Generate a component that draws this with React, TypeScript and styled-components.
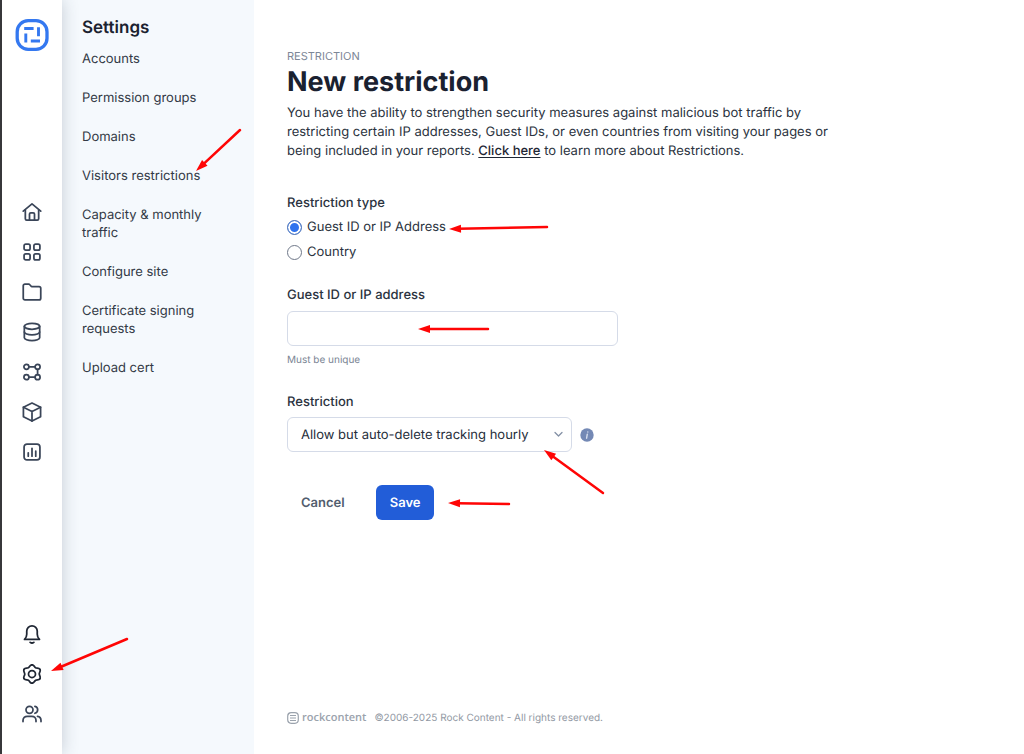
import React from "react";
import styled, { createGlobalStyle } from "styled-components";

const GlobalStyle = createGlobalStyle`
  *, *::before, *::after { box-sizing: border-box; }
  body {
    margin: 0;
    background: #ffffff;
    color: #2b3340;
    font-family: Inter, "Liberation Sans", sans-serif;
    font-size: 13px;
    line-height: 18px;
    text-rendering: geometricPrecision;
  }
  h1, h2, p, ul, fieldset { margin: 0; padding: 0; border: 0; }
  button, input, select { font: inherit; color: inherit; text-rendering: inherit; }
`;

const Page = styled.div`
  position: relative;
  display: flex;
  min-height: 100vh;
`;

const Rail = styled.nav`
  position: relative;
  z-index: 1;
  display: flex;
  flex-direction: column;
  align-items: center;
  flex: 0 0 62px;
  padding: 19px 0 28px;
  border-left: 2px solid #37373a;
  background: #ffffff;
  box-shadow: 0 0 16px rgba(40, 60, 80, 0.24);
`;

const RailGroup = styled.div<{ $push?: boolean }>`
  display: flex;
  flex-direction: column;
  gap: 16px;
  margin-top: ${(p) => (p.$push ? "auto" : "149px")};
`;

const RailLink = styled.a<{ $active?: boolean }>`
  display: flex;
  width: 24px;
  height: 24px;
  align-items: center;
  justify-content: center;
  color: ${(p) => (p.$active ? "#1f2633" : "#3a4558")};
`;

const LogoLink = styled.a`
  display: flex;
`;

const Sidebar = styled.aside`
  flex: 0 0 192px;
  padding: 18px 20px;
  background: #f5f9fd;
`;

const SidebarTitle = styled.h2`
  color: #1b2230;
  font-size: 17px;
  font-weight: 600;
  line-height: 20px;
`;

const Menu = styled.ul`
  display: flex;
  flex-direction: column;
  gap: 21px;
  margin-top: 12px;
  list-style: none;
`;

const MenuLink = styled.a`
  display: block;
  color: #333a46;
  text-decoration: none;
`;

const Main = styled.main`
  display: flex;
  flex: 1;
  flex-direction: column;
  min-width: 0;
  padding: 48px 33px 27px;
`;

const Eyebrow = styled.p`
  color: #7d8797;
  font-size: 11px;
  line-height: 16px;
`;

const Title = styled.h1`
  color: #1a2130;
  font-size: 27px;
  font-weight: 700;
  line-height: 36px;
`;

const Intro = styled.p`
  max-width: 550px;
  margin-top: 4px;
  line-height: 19px;
`;

const IntroLink = styled.a`
  color: #1f2633;
  font-weight: 500;
  text-underline-offset: 2px;
`;

const Form = styled.form`
  display: flex;
  flex-direction: column;
  align-items: flex-start;
`;

const Field = styled.div`
  display: flex;
  flex-direction: column;
  align-items: flex-start;
  width: 100%;
  margin-top: 25px;
`;

const RadioField = styled.fieldset`
  display: flex;
  flex-direction: column;
  gap: 7px;
  margin-top: 33px;
`;

const Legend = styled.legend`
  margin-bottom: 6px;
  padding: 0;
  font-weight: 500;
`;

const Label = styled.label`
  font-weight: 500;
`;

const RadioLabel = styled.label`
  display: flex;
  align-items: center;
  gap: 5px;
`;

const Radio = styled.input`
  appearance: none;
  width: 15px;
  height: 15px;
  margin: 0;
  border: 1px solid #6f7889;
  border-radius: 50%;
  background: #ffffff;

  &:checked {
    border-color: #5478b8;
    background: #2f73ee;
    box-shadow: inset 0 0 0 2px #ffffff;
  }
`;

const TextInput = styled.input`
  width: 331px;
  max-width: 100%;
  height: 35px;
  margin-top: 7px;
  padding: 0 13px;
  border: 1px solid #d5dbe8;
  border-radius: 6px;
  background: #ffffff;
`;

const Hint = styled.p`
  margin-top: 6px;
  color: #7b8594;
  font-size: 10px;
  line-height: 16px;
`;

const SelectRow = styled.div`
  display: flex;
  align-items: center;
  gap: 8px;
  margin-top: 6px;
`;

const SelectBox = styled.div`
  position: relative;
  display: flex;
  color: #8390a5;
`;

const Select = styled.select`
  appearance: none;
  width: 285px;
  height: 35px;
  padding: 0 24px 0 13px;
  border: 1px solid #d5dbe8;
  border-radius: 6px;
  background: #ffffff;
  color: #262e3b;
`;

const Chevron = styled.svg`
  position: absolute;
  top: 14px;
  right: 9px;
  pointer-events: none;
`;

const InfoButton = styled.button`
  display: flex;
  padding: 0;
  border: 0;
  background: none;
`;

const Actions = styled.div`
  display: flex;
  gap: 17px;
  margin-top: 33px;
`;

const Button = styled.button<{ $primary?: boolean }>`
  height: 35px;
  padding: 0 14px;
  border: 0;
  border-radius: 6px;
  background: ${(p) => (p.$primary ? "#225dd8" : "transparent")};
  color: ${(p) => (p.$primary ? "#ffffff" : "#525d6e")};
  font-weight: 600;
`;

const Footer = styled.footer`
  display: flex;
  align-items: center;
  gap: 8px;
  margin-top: auto;
  color: #9299a4;
  font-size: 10px;
`;

const Brand = styled.span`
  display: flex;
  align-items: center;
  gap: 3px;
  color: #9ba3ad;
  font-family: "Open Sans", "Noto Sans", sans-serif;
  font-size: 11px;
  font-weight: 600;
`;

const ArrowLayer = styled.svg`
  position: absolute;
  top: 0;
  left: 0;
  z-index: 2;
  pointer-events: none;
`;

const icons = {
  home: (
    <>
      <path d="M1.500 11 12 2.300 22.500 11" />
      <path d="M4 9.500V20a1.600 1.600 0 0 0 1.600 1.600h12.800A1.600 1.600 0 0 0 20 20V9.500" />
      <path d="M9 21.500v-7a1.600 1.600 0 0 1 1.600-1.600h2.800a1.600 1.600 0 0 1 1.600 1.600v7" />
    </>
  ),
  grid: (
    <>
      <rect x="2.500" y="2.500" width="7.200" height="7.200" rx="2" />
      <rect x="14.300" y="2.500" width="7.200" height="7.200" rx="2" />
      <rect x="2.500" y="14.300" width="7.200" height="7.200" rx="2" />
      <rect x="14.300" y="14.300" width="7.200" height="7.200" rx="2" />
    </>
  ),
  folder: (
    <path d="M1.500 4.600a2 2 0 0 1 2-2h4.500c.6 0 1 .2 1.400.7l1.300 1.500c.3.4.8.6 1.300.6h8.500a2 2 0 0 1 2 2v12a2 2 0 0 1-2 2h-17a2 2 0 0 1-2-2Z" />
  ),
  database: (
    <>
      <ellipse cx="12" cy="5.200" rx="9.200" ry="3.500" />
      <path d="M2.800 5.200v13.600c0 1.900 4.100 3.500 9.200 3.500s9.200-1.600 9.200-3.500V5.200" />
      <path d="M2.800 12c0 1.900 4.100 3.500 9.200 3.500s9.200-1.600 9.200-3.500" />
    </>
  ),
  flow: (
    <>
      <circle cx="5.300" cy="5.800" r="3" />
      <circle cx="18.700" cy="5.800" r="3" />
      <circle cx="5.300" cy="18.200" r="3" />
      <circle cx="18.700" cy="18.200" r="3" />
      <path d="M8.300 5.800h7.400M8.300 18.200h7.400M18.700 8.800v6.400" />
    </>
  ),
  box: (
    <>
      <path d="M12 1.300 22.300 6.300v11.300L12 22.800 1.700 17.600V6.300Z" />
      <path d="m1.700 6.300 10.300 5 10.300-5M12 11.300v11.500" />
    </>
  ),
  chart: (
    <>
      <rect x="2.500" y="2.500" width="19" height="19" rx="3.500" />
      <path d="M7.500 17v-4M12 17V7.500M16.500 17v-6" />
    </>
  ),
  bell: (
    <>
      <path d="M3 18.500c1.700-1.600 2.700-3.300 2.700-6.100V8.500a6.300 6.300 0 0 1 12.600 0v3.900c0 2.800 1 4.500 2.700 6.100Z" />
      <path d="M9.800 22c1.200.9 3.200.9 4.400 0" />
    </>
  ),
  gear: (
    <>
      {[0, 60, 120, 180, 240, 300].map((angle) => (
        <path
          key={angle}
          transform={`rotate(${angle} 12 12)`}
          d="M12 .900C14.500 .900 14.500 3.400 16.200 4.400C17.900 5.400 20.100 4.200 21.600 6.450"
        />
      ))}
      <circle cx="12" cy="12" r="4.200" />
    </>
  ),
  users: (
    <>
      <circle cx="9" cy="7" r="4.200" />
      <path d="M1.200 21v-1.300a5 5 0 0 1 5-5h5.600a5 5 0 0 1 5 5V21" />
      <path d="M15.500 2.900a4.200 4.200 0 0 1 0 8.200M18.600 14.900a5 5 0 0 1 4.200 4.900V21" />
    </>
  ),
};

type IconName = keyof typeof icons;

const Icon = ({ name }: { name: IconName }) => (
  <svg
    width="20"
    height="20"
    viewBox="0 0 24 24"
    fill="none"
    stroke="currentColor"
    strokeWidth="2.100"
    strokeLinecap="round"
    strokeLinejoin="round"
    aria-hidden="true"
  >
    {icons[name]}
  </svg>
);

const Logo = () => (
  <svg width="34" height="32" viewBox="0 0 34 32" fill="none" stroke="#3478f0" aria-hidden="true">
    <rect x="2.200" y="1.700" width="29.800" height="28.600" rx="11" strokeWidth="3.300" />
    <path d="M9.200 9.500h9.400M23.500 8.200v9M10.800 14.500v9M15.800 22h9.200" strokeWidth="2.900" />
  </svg>
);

const primaryLinks: [IconName, string][] = [
  ["home", "Home"],
  ["grid", "Apps"],
  ["folder", "Folders"],
  ["database", "Data"],
  ["flow", "Integrations"],
  ["box", "Packages"],
  ["chart", "Reports"],
];

const utilityLinks: [IconName, string][] = [
  ["bell", "Notifications"],
  ["gear", "Settings"],
  ["users", "Users"],
];

const menuItems = [
  "Accounts",
  "Permission groups",
  "Domains",
  "Visitors restrictions",
  "Capacity & monthly traffic",
  "Configure site",
  "Certificate signing requests",
  "Upload cert",
];

/* Each arrow runs from its tail to its tip. */
const arrows = [
  [240, 130, 196, 171],
  [547, 227, 449, 229],
  [488, 329, 418, 329],
  [603, 493, 544, 450],
  [509, 504, 448, 503],
  [127, 639, 51, 671],
];

const Arrows = () => (
  <ArrowLayer width="620" height="700" viewBox="0 0 620 700" aria-hidden="true">
    {arrows.map(([x1, y1, x2, y2]) => {
      const length = Math.hypot(x2 - x1, y2 - y1);
      const angle = (Math.atan2(y2 - y1, x2 - x1) * 180) / Math.PI;
      return (
        <g key={`${x1}-${y1}`} transform={`translate(${x1} ${y1}) rotate(${angle})`}>
          <path d={`M0 0H${length - 9}`} stroke="#ff0505" strokeWidth="2.500" strokeLinecap="round" />
          <path d={`M${length} 0l-12 -4v8Z`} fill="#ff0505" />
        </g>
      );
    })}
  </ArrowLayer>
);

export default function App() {
  return (
    <>
      <GlobalStyle />
      <Page>
        <Rail aria-label="Primary">
          <LogoLink href="#" aria-label="Dashboard">
            <Logo />
          </LogoLink>
          <RailGroup>
            {primaryLinks.map(([name, label]) => (
              <RailLink key={name} href="#" aria-label={label}>
                <Icon name={name} />
              </RailLink>
            ))}
          </RailGroup>
          <RailGroup $push>
            {utilityLinks.map(([name, label]) => (
              <RailLink key={name} href="#" aria-label={label} $active={name !== "users"}>
                <Icon name={name} />
              </RailLink>
            ))}
          </RailGroup>
        </Rail>

        <Sidebar>
          <SidebarTitle>Settings</SidebarTitle>
          <Menu>
            {menuItems.map((item) => (
              <li key={item}>
                <MenuLink href="#">{item}</MenuLink>
              </li>
            ))}
          </Menu>
        </Sidebar>

        <Main>
          <Eyebrow>RESTRICTION</Eyebrow>
          <Title>New restriction</Title>
          <Intro>
            You have the ability to strengthen security measures against malicious bot traffic by
            restricting certain IP addresses, Guest IDs, or even countries from visiting your pages
            or being included in your reports. <IntroLink href="#">Click here</IntroLink> to learn
            more about Restrictions.
          </Intro>

          <Form onSubmit={(event) => event.preventDefault()}>
            <RadioField>
              <Legend>Restriction type</Legend>
              <RadioLabel>
                <Radio type="radio" name="type" value="guest" defaultChecked />
                Guest ID or IP Address
              </RadioLabel>
              <RadioLabel>
                <Radio type="radio" name="type" value="country" />
                Country
              </RadioLabel>
            </RadioField>

            <Field>
              <Label htmlFor="guest">Guest ID or IP address</Label>
              <TextInput id="guest" type="text" aria-describedby="guest-hint" />
              <Hint id="guest-hint">Must be unique</Hint>
            </Field>

            <Field>
              <Label htmlFor="restriction">Restriction</Label>
              <SelectRow>
                <SelectBox>
                  <Select id="restriction">
                    <option>Allow but auto-delete tracking hourly</option>
                  </Select>
                  <Chevron width="9" height="7" viewBox="0 0 9 7" fill="none" aria-hidden="true">
                    <path d="m1 1.500 3.500 3.500L8 1.500" stroke="currentColor" strokeWidth="1.300" strokeLinecap="round" strokeLinejoin="round" />
                  </Chevron>
                </SelectBox>
                <InfoButton type="button" aria-label="About this restriction">
                  <svg width="14" height="14" viewBox="0 0 14 14" aria-hidden="true">
                    <circle cx="7" cy="7" r="6.700" fill="#7489b5" />
                    <path d="M7.300 6.200 6.600 10.200M7.800 3.900v.2" stroke="#d5dded" strokeWidth="1.400" strokeLinecap="round" />
                  </svg>
                </InfoButton>
              </SelectRow>
            </Field>

            <Actions>
              <Button type="button">Cancel</Button>
              <Button type="submit" $primary>
                Save
              </Button>
            </Actions>
          </Form>

          <Footer>
            <Brand>
              <svg width="12" height="12" viewBox="0 0 12 12" fill="none" stroke="currentColor" aria-hidden="true">
                <rect x="0.700" y="0.700" width="10.600" height="10.600" rx="3.500" strokeWidth="1.200" />
                <path d="M3 3.500h6M3 6h6M3 8.500h6" strokeWidth="1" />
              </svg>
              rockcontent
            </Brand>
            <span>©2006-2025 Rock Content - All rights reserved.</span>
          </Footer>
        </Main>
        <Arrows />
      </Page>
    </>
  );
}
